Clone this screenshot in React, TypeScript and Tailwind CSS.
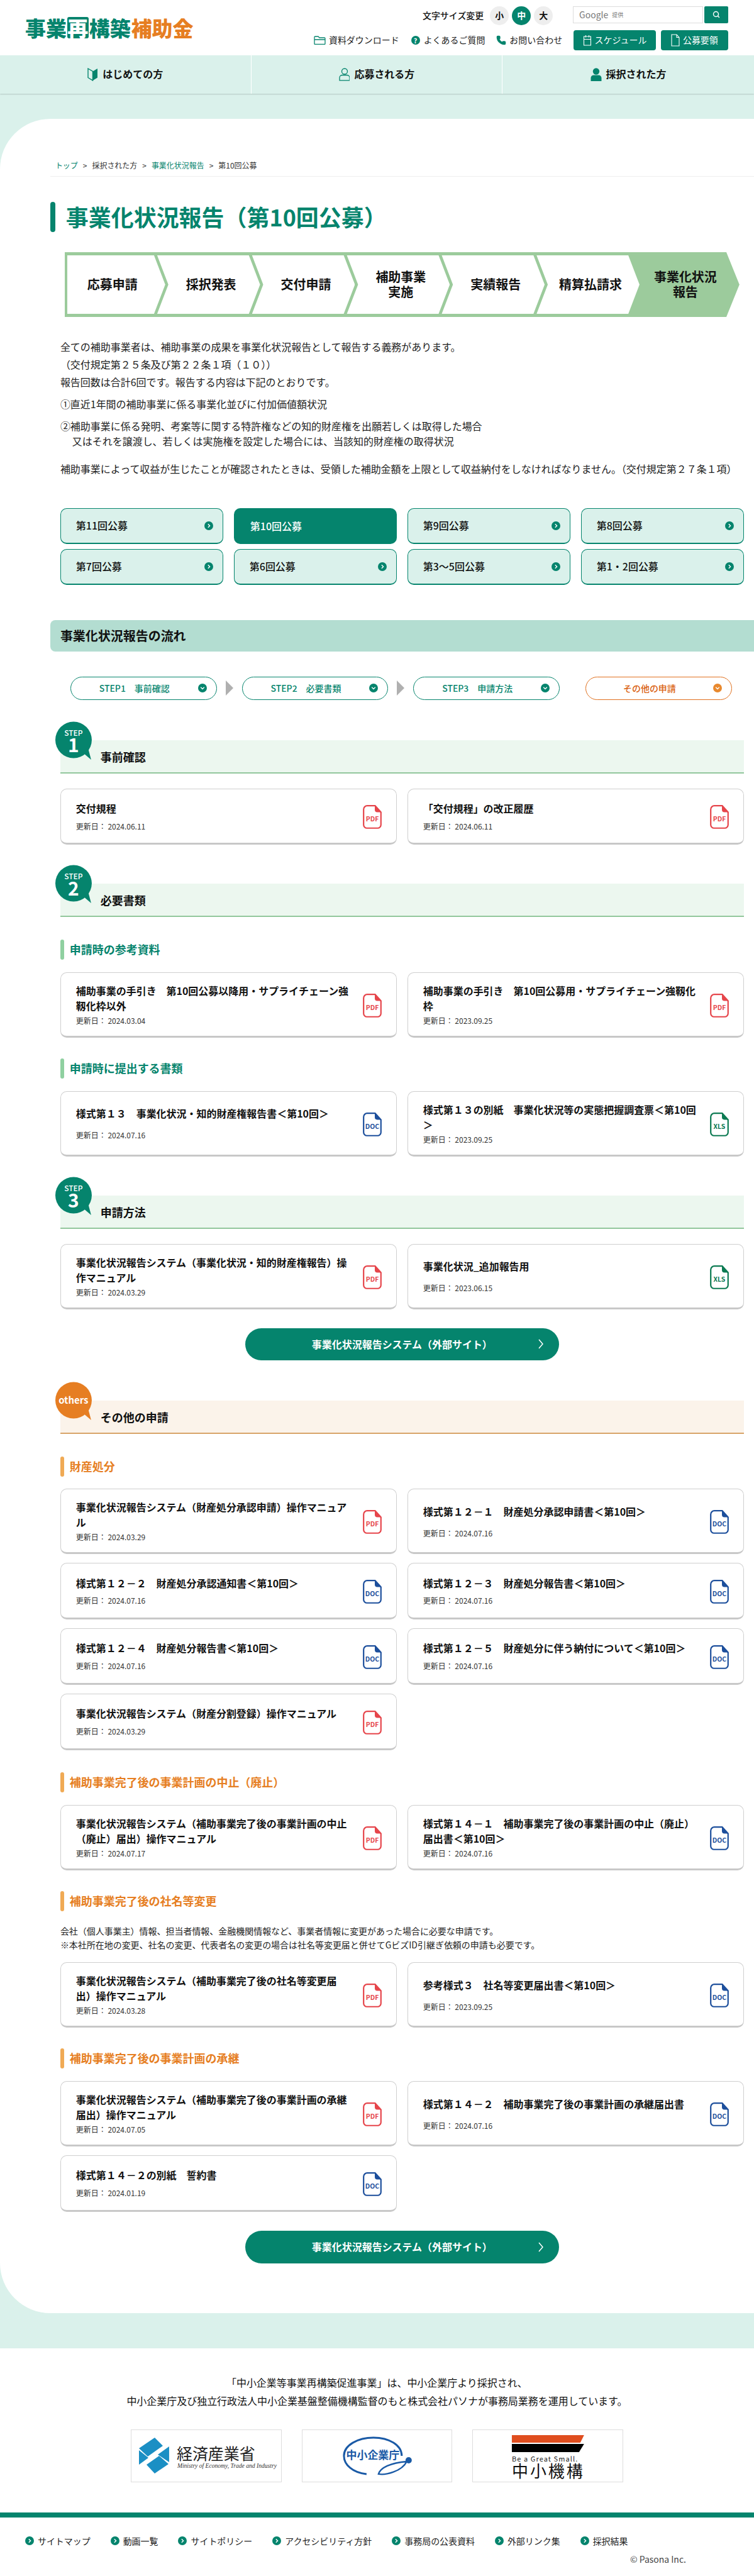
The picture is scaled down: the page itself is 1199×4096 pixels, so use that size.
import React from 'react';
import { Phone, Search } from 'lucide-react';

type FileKind = 'pdf' | 'doc' | 'xls';
type Doc = { title: string; date: string; kind: FileKind; one?: boolean };

const GREEN = '#05846d';

const fileColors: Record<FileKind, string> = { pdf: '#e6454b', doc: '#1d4f9c', xls: '#0c7a52' };

const FileIcon = ({ kind }: { kind: FileKind }) => {
  const color = fileColors[kind];
  return (
    <svg viewBox="0 0 30 38" className="w-[30px] h-[38px] shrink-0">
      <path d="M7 1.2H19.5L28.8 11.5V31.5a5.3 5.3 0 0 1-5.3 5.3H6.5a5.3 5.3 0 0 1-5.3-5.3V7a5.8 5.8 0 0 1 5.8-5.8Z" fill="#fff" stroke={color} strokeWidth="2.2" />
      <path d="M19 1.2 L28.8 11.5 H23 a4 4 0 0 1-4-4Z" fill={color} />
      <text x="15" y="26.5" textAnchor="middle" fontSize="10.5" fontWeight="700" fill={color} fontFamily="'Noto Sans CJK JP',sans-serif">{kind.toUpperCase()}</text>
    </svg>
  );
};

const RoundChevron = ({ color = GREEN, down = false }: { color?: string; down?: boolean }) => (
  <svg viewBox="0 0 14 14" className="w-[14px] h-[14px] shrink-0">
    <circle cx="7" cy="7" r="7" fill={color} />
    <path d={down ? 'M4.2 5.8 7 8.6l2.8-2.8' : 'M5.8 4.2 8.6 7l-2.8 2.8'} fill="none" stroke="#fff" strokeWidth="1.4" />
  </svg>
);

const DocCard = ({ doc, tall }: { doc: Doc; tall?: boolean }) => {
  const gap = !tall ? 'mt-[5px]' : doc.one ? 'mt-[11px]' : 'mt-0';
  return (
    <div className={`${tall ? 'h-[104px]' : 'h-[90px]'} bg-white border border-[#cfcfcf] border-b-[4px] border-b-[#c8c8c8] rounded-[10px] pl-[24px] pr-[23px] pt-[4px] flex items-center gap-[20px]`}>
      <div className="flex-1 min-w-0">
        <p className="text-[16px] leading-[24px] font-bold text-[#111]">{doc.title}</p>
        <p className={`${gap} text-[12px] leading-[22px] text-[#333]`}>更新日： {doc.date}</p>
      </div>
      <FileIcon kind={doc.kind} />
    </div>
  );
};

const CardGrid = ({ rows }: { rows: { tall?: boolean; docs: Doc[] }[] }) => (
  <div className="grid grid-cols-2 gap-x-[17px] gap-y-[14px]">
    {rows.map((row) => row.docs.map((doc) => <DocCard key={doc.title} doc={doc} tall={row.tall} />))}
  </div>
);

const SubHeading = ({ children, orange }: { children: React.ReactNode; orange?: boolean }) => (
  <div className="flex items-center h-[32px]">
    <span className={`w-[6px] h-[32px] rounded-[3px] ${orange ? 'bg-[#f0aa55]' : 'bg-[#8fd0a0]'}`}></span>
    <h4 className={`ml-[9px] text-[18px] leading-[32px] font-bold ${orange ? 'text-[#e67e22]' : 'text-[#05846d]'}`}>{children}</h4>
  </div>
);

const StepBand = ({ label, title, orange }: { label: string; title: string; orange?: boolean }) => (
  <div className={`relative h-[53px] pl-[64px] pt-[3px] flex items-center border-b-[3px] ${orange ? 'bg-[#fbf3ea] border-[#d8a468]' : 'bg-[#ecf7ef] border-[#92c79c]'}`}>
    <div className="absolute left-[-8px] top-[-30px] w-[58px] h-[61px]">
      <svg viewBox="0 0 58 61" className="absolute inset-0 w-[58px] h-[61px]">
        <circle cx="29" cy="29.5" r="29" fill={orange ? '#e67e22' : GREEN} />
        <path d="M44 50 L57 61 L52 42 Z" fill={orange ? '#e67e22' : GREEN} />
      </svg>
      {orange ? (
        <span className="absolute inset-x-0 top-[18px] text-center text-white text-[15px] leading-[22px] font-bold">others</span>
      ) : (
        <>
          <span className="absolute inset-x-0 top-[12px] text-center text-white text-[12px] leading-[12px] font-medium">STEP</span>
          <span className="absolute inset-x-0 top-[25px] text-center text-white text-[30px] leading-[24px] font-bold">{label}</span>
        </>
      )}
    </div>
    <h3 className="text-[18px] leading-[26px] font-bold text-[#111]">{title}</h3>
  </div>
);

const SystemButton = () => (
  <a className="relative mx-auto flex items-center justify-center w-[500px] h-[52px] rounded-full bg-[#05846d] text-white text-[16px] font-bold">
    事業化状況報告システム（外部サイト）
    <svg viewBox="0 0 10 18" className="absolute right-[24px] top-[17px] w-[10px] h-[18px]">
      <path d="M2 2l6 7-6 7" fill="none" stroke="#fff" strokeWidth="1.5" />
    </svg>
  </a>
);

const flowSteps = ['応募申請', '採択発表', '交付申請', '補助事業\n実施', '実績報告', '精算払請求'];
const roundTabs = ['第11回公募', '第10回公募', '第9回公募', '第8回公募', '第7回公募', '第6回公募', '第3～5回公募', '第1・2回公募'];
const footerLinks = ['サイトマップ', '動画一覧', 'サイトポリシー', 'アクセシビリティ方針', '事務局の公表資料', '外部リンク集', '採択結果'];

const Header = () => (
  <header className="h-[88px] pl-[40px] pr-[41px] pt-[10px] flex justify-between bg-white">
    <div className="mt-[17px] h-[34px] flex items-center text-[33px] leading-[34px] font-black text-[#05846d]">
      事業
      <span className="mx-[1px] w-[34px] h-[34px] rounded-[3px] bg-[#05846d] text-white flex items-center justify-center">再</span>
      構築
      <span className="ml-[1px] text-[#e67e22]">補助金</span>
    </div>
    <div className="flex flex-col items-end">
      <div className="h-[30px] flex items-center">
        <span className="text-[14px] font-medium text-[#111] mr-[10px]">文字サイズ変更</span>
        <div className="flex gap-[5px]">
          <span className="w-[30px] h-[30px] rounded-full bg-[#eeeeee] flex items-center justify-center text-[14px] font-bold text-[#111]">小</span>
          <span className="w-[30px] h-[30px] rounded-full bg-[#05846d] flex items-center justify-center text-[14px] font-bold text-white">中</span>
          <span className="w-[30px] h-[30px] rounded-full bg-[#eeeeee] flex items-center justify-center text-[14px] font-bold text-[#111]">大</span>
        </div>
        <div className="ml-[32px] flex self-start">
          <div className="w-[207px] h-[27px] border border-[#dddddd] pl-[9px] flex items-center text-[14px] text-[#777]">
            Google <span className="ml-[6px] text-[9px]">提供</span>
          </div>
          <div className="ml-[2px] w-[38px] h-[27px] rounded-[2px] bg-[#05846d] flex items-center justify-center">
            <Search className="w-[12px] h-[12px] text-white" strokeWidth={3} />
          </div>
        </div>
      </div>
      <div className="mt-[8px] h-[32px] flex items-center text-[14px] text-[#222]">
        <svg viewBox="0 0 19 14" className="w-[19px] h-[14px] mr-[5px]">
          <path d="M1 12.5V2a1 1 0 0 1 1-1h5l2 2h8a1 1 0 0 1 1 1v8.5a1 1 0 0 1-1 1H2a1 1 0 0 1-1-1Z M1 6h17" fill="none" stroke="#05846d" strokeWidth="1.3" />
        </svg>
        <span>資料ダウンロード</span>
        <span className="ml-[19px] mr-[6px] w-[14px] h-[14px] rounded-full bg-[#05846d] text-white text-[11px] font-bold flex items-center justify-center">?</span>
        <span>よくあるご質問</span>
        <Phone className="ml-[18px] mr-[5px] w-[16px] h-[16px] text-[#05846d]" fill="#05846d" />
        <span>お問い合わせ</span>
        <a className="ml-[18px] w-[131px] h-[32px] rounded-[4px] bg-[#05846d] text-white flex items-center justify-center gap-[5px]">
          <svg viewBox="0 0 14 18" className="w-[14px] h-[18px]">
            <path d="M1.5 3h11v14h-11Z M1.5 7.5h11 M4.5 1v3.5 M9.5 1v3.5" fill="none" stroke="#fff" strokeWidth="1.1" />
          </svg>
          スケジュール
        </a>
        <a className="ml-[8px] w-[107px] h-[32px] rounded-[4px] bg-[#05846d] text-white flex items-center justify-center gap-[5px]">
          <svg viewBox="0 0 14 20" className="w-[14px] h-[20px]">
            <path d="M1 1h8l4 4.5V19H1Z M9 1v4.5h4" fill="none" stroke="#fff" strokeWidth="1.1" />
          </svg>
          公募要領
        </a>
      </div>
    </div>
  </header>
);

const NavBar = () => (
  <nav className="h-[61px] grid grid-cols-3 bg-[#daf1eb] shadow-[0_1px_2px_rgba(0,0,0,0.18)]">
    <a className="flex items-center justify-center gap-[7px] border-r border-white text-[16px] font-bold text-[#111]">
      <svg viewBox="0 0 17 21" className="w-[17px] h-[21px]">
        <path d="M1 1l7.5 4.5V20L1 15.5Z" fill="none" stroke="#05846d" strokeWidth="1.4" />
        <path d="M16 1L8.5 5.5V20l7.5-4.5Z" fill="#05846d" />
      </svg>
      はじめての方
    </a>
    <a className="flex items-center justify-center gap-[7px] border-r border-white text-[16px] font-bold text-[#111]">
      <svg viewBox="0 0 18 21" className="w-[18px] h-[21px]">
        <circle cx="9" cy="5.5" r="4.5" fill="none" stroke="#05846d" strokeWidth="1.3" />
        <path d="M1 20v-4.5A4 4 0 0 1 5 11.5h8a4 4 0 0 1 4 4V20Z" fill="none" stroke="#05846d" strokeWidth="1.3" />
      </svg>
      応募される方
    </a>
    <a className="flex items-center justify-center gap-[7px] text-[16px] font-bold text-[#111]">
      <svg viewBox="0 0 18 21" className="w-[18px] h-[21px]">
        <circle cx="9" cy="5.5" r="5.2" fill="#05846d" />
        <path d="M0.5 21v-5A4.5 4.5 0 0 1 5 11.5h8A4.5 4.5 0 0 1 17.5 16v5Z" fill="#05846d" />
      </svg>
      採択された方
    </a>
  </nav>
);

const Flow = () => (
  <div className="ml-[23px] w-[1074px] h-[104px] bg-[#9ccb9c] [clip-path:polygon(0_0,calc(100%_-_21px)_0,100%_50%,calc(100%_-_21px)_100%,0_100%)] flex py-[5px] pl-[4px] text-[20px] leading-[25px] font-bold text-[#111] text-center">
    {flowSteps.map((step, i) =>
      i === 0 ? (
        <div key={step} className="w-[156px] pr-[12px] bg-white [clip-path:polygon(0_0,calc(100%_-_18px)_0,100%_50%,calc(100%_-_18px)_100%,0_100%)] flex items-center justify-center">
          {step}
        </div>
      ) : (
        <div key={step} className="w-[164px] -ml-[13px] pl-[8px] bg-white whitespace-pre-line [clip-path:polygon(0_0,calc(100%_-_18px)_0,100%_50%,calc(100%_-_18px)_100%,0_100%,18px_50%)] flex items-center justify-center">
          {step}
        </div>
      )
    )}
    <div className="flex-1 -ml-[13px] pl-[18px] pr-[18px] flex items-center justify-center">事業化状況<br />報告</div>
  </div>
);

const Intro = () => (
  <div className="ml-[16px] mt-[34px] text-[16px] leading-[28px] text-[#222]">
    <p>全ての補助事業者は、補助事業の成果を事業化状況報告として報告する義務があります。</p>
    <p>（交付規定第２５条及び第２２条１項（１０））</p>
    <p>報告回数は合計6回です。報告する内容は下記のとおりです。</p>
    <p className="mt-[7px]">①直近1年間の補助事業に係る事業化並びに付加価値額状況</p>
    <p className="mt-[9px] leading-[24px]">②補助事業に係る発明、考案等に関する特許権などの知的財産権を出願若しくは取得した場合<br /><span className="pl-[19px]">又はそれを譲渡し、若しくは実施権を設定した場合には、当該知的財産権の取得状況</span></p>
    <p className="mt-[18px]">補助事業によって収益が生じたことが確認されたときは、受領した補助金額を上限として収益納付をしなければなりません。（交付規定第２７条１項）</p>
  </div>
);

const Tabs = () => (
  <div className="mx-[16px] mt-[48px] grid grid-cols-4 gap-x-[17px] gap-y-[8px]">
    {roundTabs.map((tab) =>
      tab === '第10回公募' ? (
        <div key={tab} className="h-[57px] rounded-[10px] bg-[#05846d] text-white text-[16px] font-medium flex items-center pl-[26px]">{tab}</div>
      ) : (
        <a key={tab} className="h-[57px] rounded-[10px] border-2 border-b-[3px] border-[#05846d] bg-[#daf1eb] text-[#111] text-[16px] font-medium flex items-center justify-between pl-[24px] pr-[15px]">
          {tab}
          <RoundChevron />
        </a>
      )
    )}
  </div>
);

const Pill = ({ label, orange }: { label: string; orange?: boolean }) => (
  <a className={`w-[233px] h-[37px] rounded-full border bg-white pr-[15px] flex items-center text-[14px] font-medium ${orange ? 'border-[#e0701e] text-[#d9600f]' : 'border-[#05846d] text-[#05846d]'}`}>
    <span className="flex-1 text-center">{label}</span>
    <RoundChevron down color={orange ? '#e8892e' : GREEN} />
  </a>
);

const Arrow = () => (
  <svg viewBox="0 0 12 24" className="w-[12px] h-[24px] mx-[14px] shrink-0">
    <path d="M0 0l12 12L0 24Z" fill="#b0b0b0" />
  </svg>
);

const Logos = () => (
  <div className="mt-[32px] flex justify-center gap-[32px]">
    <div className="w-[240px] h-[84px] border border-[#dddddd]">
      <svg viewBox="0 0 238 82" className="w-[238px] h-[82px]">
        <g transform="translate(12,12)" fill="#1b8fc4">
          <path d="M25 0 38 13 14 30 0 17Z" />
          <path d="M0 20 0 43 15 32Z" />
          <path d="M48 14 48 39 30 27Z" />
          <path d="M47 42 25 57 12 43 32 29Z" />
        </g>
        <text x="72" y="47" fontSize="25" fill="#222" fontFamily="'Noto Sans CJK JP',sans-serif">経済産業省</text>
        <text x="73" y="60" fontSize="9.6" fontStyle="italic" fill="#333" fontFamily="'Liberation Serif',serif">Ministry of Economy, Trade and Industry</text>
      </svg>
    </div>
    <div className="w-[240px] h-[84px] border border-[#dddddd]">
      <svg viewBox="0 0 238 82" className="w-[238px] h-[82px]">
        <path d="M102 70 C 80 68 66 55 66 41 C 66 24 88 12 113 12 C 138 12 158 24 158 41" fill="none" stroke="#1a5aa6" strokeWidth="3" />
        <circle cx="169" cy="48" r="5" fill="#1a5aa6" />
        <path d="M166 50 C 158 66 132 72 121 70 C 124 60 140 52 166 50 Z" fill="none" stroke="#1a5aa6" strokeWidth="2.4" />
        <text x="112" y="46" textAnchor="middle" fontSize="17" fontWeight="700" fill="#1a5aa6" fontFamily="'Noto Sans CJK JP',sans-serif">中小企業庁</text>
      </svg>
    </div>
    <div className="w-[240px] h-[84px] border border-[#dddddd]">
      <svg viewBox="0 0 238 82" className="w-[238px] h-[82px]">
        <path d="M62 8h115l-6 12H62Z" fill="#e04e1f" />
        <path d="M62 22h115l-8 13H62Z" fill="#000" />
        <text x="62" y="50" fontSize="11" letterSpacing="1.1" fill="#222" fontFamily="'Noto Sans CJK JP',sans-serif">Be a Great Small.</text>
        <text x="62" y="75" fontSize="26" letterSpacing="3" fill="#111" fontFamily="'Noto Sans CJK JP',sans-serif">中小機構</text>
      </svg>
    </div>
  </div>
);

const Footer = () => (
  <footer className="bg-white pt-[40px]">
    <p className="text-center text-[16px] leading-[29px] text-[#111]">
      「中小企業等事業再構築促進事業」は、中小企業庁より採択され、<br />
      中小企業庁及び独立行政法人中小企業基盤整備機構監督のもと株式会社パソナが事務局業務を運用しています。
    </p>
    <Logos />
    <div className="mt-[48px] h-[8px] bg-[#05846d]"></div>
    <ul className="mt-[27px] pl-[40px] flex gap-[32px] text-[14px] leading-[20px] text-[#222]">
      {footerLinks.map((link) => (
        <li key={link} className="flex items-center gap-[6px]">
          <RoundChevron />
          {link}
        </li>
      ))}
    </ul>
    <p className="mt-[9px] pb-[18px] pr-[108px] text-right text-[14px] leading-[20px] text-[#444]">© Pasona Inc.</p>
  </footer>
);

export default function App() {
  return (
    <div className="w-[1200px] [zoom:0.999] bg-white font-['Noto_Sans_CJK_JP',sans-serif] text-[#222]">
      <Header />
      <div className="bg-[#daf1eb] pb-[56px]">
        <NavBar />
        <main className="mt-[40px] bg-white rounded-l-[80px] pl-[80px] pt-[65px] pb-[79px]">
          <div className="pl-[8px] pb-[8px] border-b border-[#eeeeee] flex gap-[8px] text-[12px] leading-[18px] text-[#333]">
            <span className="text-[#05846d]">トップ</span>
            <span>&gt;</span>
            <span>採択された方</span>
            <span>&gt;</span>
            <span className="text-[#05846d]">事業化状況報告</span>
            <span>&gt;</span>
            <span>第10回公募</span>
          </div>

          <h1 className="mt-[40px] h-[48px] flex items-center text-[36px] font-bold text-[#05846d]">
            <span className="w-[8px] h-[48px] rounded-[4px] bg-[#05846d] mr-[17px]"></span>
            事業化状況報告（第10回公募）
          </h1>

          <div className="mt-[32px]"><Flow /></div>
          <Intro />
          <Tabs />

          <h2 className="mt-[56px] h-[50px] pl-[16px] rounded-l-[8px] bg-[#b3ddd1] flex items-center text-[20px] font-bold text-[#111]">事業化状況報告の流れ</h2>

          <div className="mt-[40px] pl-[32px] flex items-center">
            <Pill label="STEP1　事前確認" />
            <Arrow />
            <Pill label="STEP2　必要書類" />
            <Arrow />
            <Pill label="STEP3　申請方法" />
            <div className="w-[41px]"></div>
            <Pill label="その他の申請" orange />
          </div>

          <div className="mx-[16px]">
            <div className="mt-[64px]"><StepBand label="1" title="事前確認" /></div>
            <div className="mt-[24px]">
              <CardGrid rows={[{ docs: [
                { title: '交付規程', date: '2024.06.11', kind: 'pdf' },
                { title: '「交付規程」の改正履歴', date: '2024.06.11', kind: 'pdf' },
              ] }]} />
            </div>

            <div className="mt-[62px]"><StepBand label="2" title="必要書類" /></div>
            <div className="mt-[36px]"><SubHeading>申請時の参考資料</SubHeading></div>
            <div className="mt-[20px]">
              <CardGrid rows={[{ tall: true, docs: [
                { title: '補助事業の手引き　第10回公募以降用・サプライチェーン強靱化枠以外', date: '2024.03.04', kind: 'pdf' },
                { title: '補助事業の手引き　第10回公募用・サプライチェーン強靱化枠', date: '2023.09.25', kind: 'pdf' },
              ] }]} />
            </div>
            <div className="mt-[33px]"><SubHeading>申請時に提出する書類</SubHeading></div>
            <div className="mt-[20px]">
              <CardGrid rows={[{ tall: true, docs: [
                { title: '様式第１３　事業化状況・知的財産権報告書＜第10回＞', date: '2024.07.16', kind: 'doc', one: true },
                { title: '様式第１３の別紙　事業化状況等の実態把握調査票＜第10回＞', date: '2023.09.25', kind: 'xls' },
              ] }]} />
            </div>

            <div className="mt-[62px]"><StepBand label="3" title="申請方法" /></div>
            <div className="mt-[24px]">
              <CardGrid rows={[{ tall: true, docs: [
                { title: '事業化状況報告システム（事業化状況・知的財産権報告）操作マニュアル', date: '2024.03.29', kind: 'pdf' },
                { title: '事業化状況_追加報告用', date: '2023.06.15', kind: 'xls', one: true },
              ] }]} />
            </div>
            <div className="mt-[30px]"><SystemButton /></div>

            <div className="mt-[64px]"><StepBand label="" title="その他の申請" orange /></div>
            <div className="mt-[36px]"><SubHeading orange>財産処分</SubHeading></div>
            <div className="mt-[19px]">
              <CardGrid rows={[
                { tall: true, docs: [
                  { title: '事業化状況報告システム（財産処分承認申請）操作マニュアル', date: '2024.03.29', kind: 'pdf' },
                  { title: '様式第１２－１　財産処分承認申請書＜第10回＞', date: '2024.07.16', kind: 'doc', one: true },
                ] },
                { docs: [
                  { title: '様式第１２－２　財産処分承認通知書＜第10回＞', date: '2024.07.16', kind: 'doc' },
                  { title: '様式第１２－３　財産処分報告書＜第10回＞', date: '2024.07.16', kind: 'doc' },
                ] },
                { docs: [
                  { title: '様式第１２－４　財産処分報告書＜第10回＞', date: '2024.07.16', kind: 'doc' },
                  { title: '様式第１２－５　財産処分に伴う納付について＜第10回＞', date: '2024.07.16', kind: 'doc' },
                ] },
                { docs: [
                  { title: '事業化状況報告システム（財産分割登録）操作マニュアル', date: '2024.03.29', kind: 'pdf' },
                ] },
              ]} />
            </div>

            <div className="mt-[35px]"><SubHeading orange>補助事業完了後の事業計画の中止（廃止）</SubHeading></div>
            <div className="mt-[20px]">
              <CardGrid rows={[{ tall: true, docs: [
                { title: '事業化状況報告システム（補助事業完了後の事業計画の中止（廃止）届出）操作マニュアル', date: '2024.07.17', kind: 'pdf' },
                { title: '様式第１４－１　補助事業完了後の事業計画の中止（廃止）届出書＜第10回＞', date: '2024.07.16', kind: 'doc' },
              ] }]} />
            </div>

            <div className="mt-[34px]"><SubHeading orange>補助事業完了後の社名等変更</SubHeading></div>
            <div className="mt-[21px] text-[14px] leading-[22px] text-[#222]">
              <p>会社（個人事業主）情報、担当者情報、金融機関情報など、事業者情報に変更があった場合に必要な申請です。</p>
              <p>※本社所在地の変更、社名の変更、代表者名の変更の場合は社名等変更届と併せてGビズID引継ぎ依頼の申請も必要です。</p>
            </div>
            <div className="mt-[16px]">
              <CardGrid rows={[{ tall: true, docs: [
                { title: '事業化状況報告システム（補助事業完了後の社名等変更届出）操作マニュアル', date: '2024.03.28', kind: 'pdf' },
                { title: '参考様式３　社名等変更届出書＜第10回＞', date: '2023.09.25', kind: 'doc', one: true },
              ] }]} />
            </div>

            <div className="mt-[33px]"><SubHeading orange>補助事業完了後の事業計画の承継</SubHeading></div>
            <div className="mt-[20px]">
              <CardGrid rows={[
                { tall: true, docs: [
                  { title: '事業化状況報告システム（補助事業完了後の事業計画の承継届出）操作マニュアル', date: '2024.07.05', kind: 'pdf' },
                  { title: '様式第１４－２　補助事業完了後の事業計画の承継届出書', date: '2024.07.16', kind: 'doc', one: true },
                ] },
                { docs: [
                  { title: '様式第１４－２の別紙　誓約書', date: '2024.01.19', kind: 'doc' },
                ] },
              ]} />
            </div>
            <div className="mt-[30px]"><SystemButton /></div>
          </div>
        </main>
      </div>
      <Footer />
    </div>
  );
}
